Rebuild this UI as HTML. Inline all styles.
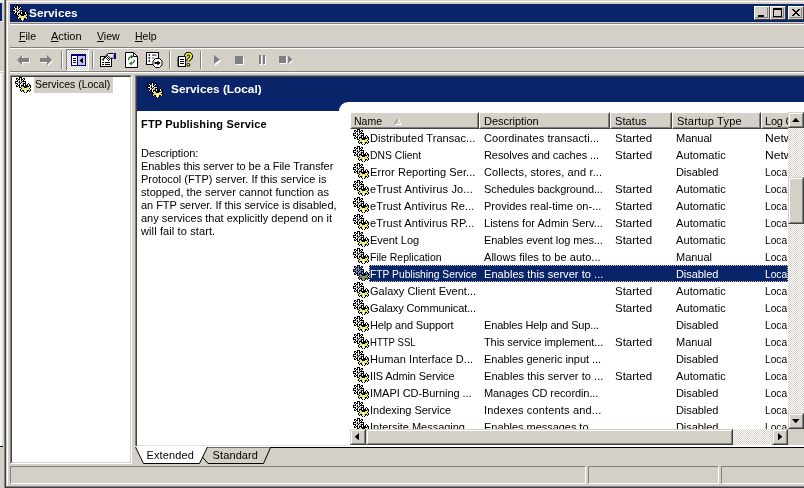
<!DOCTYPE html>
<html><head><meta charset="utf-8"><title>Services</title>
<style>
html,body{margin:0;padding:0;background:#D4D0C8;overflow:hidden}
body{width:804px;height:488px;position:relative;font-family:"Liberation Sans", sans-serif;font-size:11px;color:#000}
div{box-sizing:border-box}
u{text-decoration:underline}
</style></head><body>
<div style="position:absolute;left:0;top:0;width:804px;height:488px;overflow:hidden;will-change:transform">
<svg width="0" height="0" style="position:absolute"><defs><g id="gear" shape-rendering="crispEdges"><rect x="4" y="0" width="3" height="1" fill="#000000"/><rect x="1" y="1" width="2" height="1" fill="#000000"/><rect x="4" y="1" width="1" height="1" fill="#000000"/><rect x="5" y="1" width="1" height="1" fill="#FFFFFF"/><rect x="6" y="1" width="1" height="1" fill="#000000"/><rect x="8" y="1" width="2" height="1" fill="#000000"/><rect x="1" y="2" width="1" height="1" fill="#000000"/><rect x="2" y="2" width="1" height="1" fill="#FFFFFF"/><rect x="3" y="2" width="2" height="1" fill="#000000"/><rect x="5" y="2" width="1" height="1" fill="#FFFFFF"/><rect x="6" y="2" width="2" height="1" fill="#000000"/><rect x="8" y="2" width="1" height="1" fill="#FFFFFF"/><rect x="9" y="2" width="1" height="1" fill="#000000"/><rect x="2" y="3" width="1" height="1" fill="#000000"/><rect x="3" y="3" width="1" height="1" fill="#FFFFFF"/><rect x="4" y="3" width="1" height="1" fill="#B0B0B0"/><rect x="5" y="3" width="1" height="1" fill="#FFFFFF"/><rect x="6" y="3" width="1" height="1" fill="#000000"/><rect x="7" y="3" width="1" height="1" fill="#FFFFFF"/><rect x="8" y="3" width="1" height="1" fill="#000000"/><rect x="0" y="4" width="3" height="1" fill="#000000"/><rect x="3" y="4" width="1" height="1" fill="#FFFFFF"/><rect x="4" y="4" width="1" height="1" fill="#000000"/><rect x="5" y="4" width="1" height="1" fill="#FFFFFF"/><rect x="6" y="4" width="1" height="1" fill="#B0B0B0"/><rect x="7" y="4" width="4" height="1" fill="#000000"/><rect x="0" y="5" width="1" height="1" fill="#000000"/><rect x="1" y="5" width="2" height="1" fill="#FFFFFF"/><rect x="3" y="5" width="1" height="1" fill="#B0B0B0"/><rect x="4" y="5" width="1" height="1" fill="#000000"/><rect x="5" y="5" width="1" height="1" fill="#B0B0B0"/><rect x="6" y="5" width="1" height="1" fill="#000000"/><rect x="7" y="5" width="1" height="1" fill="#FFFFFF"/><rect x="8" y="5" width="1" height="1" fill="#B0B0B0"/><rect x="9" y="5" width="1" height="1" fill="#FFFFFF"/><rect x="10" y="5" width="1" height="1" fill="#000000"/><rect x="0" y="6" width="3" height="1" fill="#000000"/><rect x="3" y="6" width="1" height="1" fill="#FFFFFF"/><rect x="4" y="6" width="1" height="1" fill="#B0B0B0"/><rect x="5" y="6" width="1" height="1" fill="#000000"/><rect x="6" y="6" width="1" height="1" fill="#FFFFFF"/><rect x="7" y="6" width="1" height="1" fill="#B0B0B0"/><rect x="8" y="6" width="3" height="1" fill="#000000"/><rect x="13" y="6" width="1" height="1" fill="#000000"/><rect x="2" y="7" width="1" height="1" fill="#000000"/><rect x="3" y="7" width="1" height="1" fill="#FFFFFF"/><rect x="4" y="7" width="1" height="1" fill="#000000"/><rect x="5" y="7" width="1" height="1" fill="#FFFFFF"/><rect x="6" y="7" width="2" height="1" fill="#B0B0B0"/><rect x="8" y="7" width="1" height="1" fill="#000000"/><rect x="9" y="7" width="1" height="1" fill="#FFFFFF"/><rect x="10" y="7" width="1" height="1" fill="#000000"/><rect x="12" y="7" width="1" height="1" fill="#000000"/><rect x="13" y="7" width="1" height="1" fill="#FFFFFF"/><rect x="14" y="7" width="1" height="1" fill="#000000"/><rect x="1" y="8" width="1" height="1" fill="#000000"/><rect x="2" y="8" width="1" height="1" fill="#FFFFFF"/><rect x="3" y="8" width="2" height="1" fill="#000000"/><rect x="5" y="8" width="1" height="1" fill="#FFFFFF"/><rect x="6" y="8" width="3" height="1" fill="#000000"/><rect x="9" y="8" width="1" height="1" fill="#FFFFFF"/><rect x="10" y="8" width="3" height="1" fill="#000000"/><rect x="13" y="8" width="1" height="1" fill="#FFFFFF"/><rect x="14" y="8" width="2" height="1" fill="#000000"/><rect x="1" y="9" width="2" height="1" fill="#000000"/><rect x="4" y="9" width="1" height="1" fill="#000000"/><rect x="5" y="9" width="1" height="1" fill="#FFFFFF"/><rect x="6" y="9" width="1" height="1" fill="#000000"/><rect x="7" y="9" width="1" height="1" fill="#E6E67C"/><rect x="8" y="9" width="6" height="1" fill="#000000"/><rect x="14" y="9" width="1" height="1" fill="#E6E67C"/><rect x="15" y="9" width="1" height="1" fill="#000000"/><rect x="4" y="10" width="2" height="1" fill="#000000"/><rect x="6" y="10" width="3" height="1" fill="#E6E67C"/><rect x="9" y="10" width="3" height="1" fill="#000000"/><rect x="12" y="10" width="3" height="1" fill="#E6E67C"/><rect x="15" y="10" width="1" height="1" fill="#000000"/><rect x="6" y="11" width="1" height="1" fill="#000000"/><rect x="7" y="11" width="3" height="1" fill="#E6E67C"/><rect x="10" y="11" width="1" height="1" fill="#FFFFD8"/><rect x="11" y="11" width="3" height="1" fill="#E6E67C"/><rect x="14" y="11" width="1" height="1" fill="#000000"/><rect x="5" y="12" width="1" height="1" fill="#000000"/><rect x="6" y="12" width="4" height="1" fill="#E6E67C"/><rect x="10" y="12" width="1" height="1" fill="#FFFFD8"/><rect x="11" y="12" width="4" height="1" fill="#E6E67C"/><rect x="15" y="12" width="1" height="1" fill="#000000"/><rect x="5" y="13" width="1" height="1" fill="#000000"/><rect x="6" y="13" width="1" height="1" fill="#E6E67C"/><rect x="7" y="13" width="2" height="1" fill="#000000"/><rect x="9" y="13" width="1" height="1" fill="#E6E67C"/><rect x="10" y="13" width="1" height="1" fill="#FFFFD8"/><rect x="11" y="13" width="1" height="1" fill="#E6E67C"/><rect x="12" y="13" width="2" height="1" fill="#000000"/><rect x="14" y="13" width="1" height="1" fill="#E6E67C"/><rect x="15" y="13" width="1" height="1" fill="#000000"/><rect x="6" y="14" width="1" height="1" fill="#000000"/><rect x="8" y="14" width="1" height="1" fill="#000000"/><rect x="9" y="14" width="1" height="1" fill="#E6E67C"/><rect x="10" y="14" width="1" height="1" fill="#FFFFD8"/><rect x="11" y="14" width="1" height="1" fill="#E6E67C"/><rect x="12" y="14" width="1" height="1" fill="#000000"/><rect x="14" y="14" width="1" height="1" fill="#000000"/><rect x="9" y="15" width="1" height="1" fill="#000000"/><rect x="10" y="15" width="1" height="1" fill="#FFFFD8"/><rect x="11" y="15" width="1" height="1" fill="#000000"/></g><g id="geard" shape-rendering="crispEdges"><rect x="4" y="0" width="3" height="1" fill="#020A2A"/><rect x="1" y="1" width="2" height="1" fill="#020A2A"/><rect x="4" y="1" width="1" height="1" fill="#020A2A"/><rect x="5" y="1" width="1" height="1" fill="#8A96BA"/><rect x="6" y="1" width="1" height="1" fill="#020A2A"/><rect x="8" y="1" width="2" height="1" fill="#020A2A"/><rect x="1" y="2" width="1" height="1" fill="#020A2A"/><rect x="2" y="2" width="1" height="1" fill="#8A96BA"/><rect x="3" y="2" width="2" height="1" fill="#020A2A"/><rect x="5" y="2" width="1" height="1" fill="#8A96BA"/><rect x="6" y="2" width="2" height="1" fill="#020A2A"/><rect x="8" y="2" width="1" height="1" fill="#8A96BA"/><rect x="9" y="2" width="1" height="1" fill="#020A2A"/><rect x="2" y="3" width="1" height="1" fill="#020A2A"/><rect x="3" y="3" width="1" height="1" fill="#8A96BA"/><rect x="4" y="3" width="1" height="1" fill="#6A769A"/><rect x="5" y="3" width="1" height="1" fill="#8A96BA"/><rect x="6" y="3" width="1" height="1" fill="#020A2A"/><rect x="7" y="3" width="1" height="1" fill="#8A96BA"/><rect x="8" y="3" width="1" height="1" fill="#020A2A"/><rect x="0" y="4" width="3" height="1" fill="#020A2A"/><rect x="3" y="4" width="1" height="1" fill="#8A96BA"/><rect x="4" y="4" width="1" height="1" fill="#020A2A"/><rect x="5" y="4" width="1" height="1" fill="#8A96BA"/><rect x="6" y="4" width="1" height="1" fill="#6A769A"/><rect x="7" y="4" width="4" height="1" fill="#020A2A"/><rect x="0" y="5" width="1" height="1" fill="#020A2A"/><rect x="1" y="5" width="2" height="1" fill="#8A96BA"/><rect x="3" y="5" width="1" height="1" fill="#6A769A"/><rect x="4" y="5" width="1" height="1" fill="#020A2A"/><rect x="5" y="5" width="1" height="1" fill="#6A769A"/><rect x="6" y="5" width="1" height="1" fill="#020A2A"/><rect x="7" y="5" width="1" height="1" fill="#8A96BA"/><rect x="8" y="5" width="1" height="1" fill="#6A769A"/><rect x="9" y="5" width="1" height="1" fill="#8A96BA"/><rect x="10" y="5" width="1" height="1" fill="#020A2A"/><rect x="0" y="6" width="3" height="1" fill="#020A2A"/><rect x="3" y="6" width="1" height="1" fill="#8A96BA"/><rect x="4" y="6" width="1" height="1" fill="#6A769A"/><rect x="5" y="6" width="1" height="1" fill="#020A2A"/><rect x="6" y="6" width="1" height="1" fill="#8A96BA"/><rect x="7" y="6" width="1" height="1" fill="#6A769A"/><rect x="8" y="6" width="3" height="1" fill="#020A2A"/><rect x="13" y="6" width="1" height="1" fill="#020A2A"/><rect x="2" y="7" width="1" height="1" fill="#020A2A"/><rect x="3" y="7" width="1" height="1" fill="#8A96BA"/><rect x="4" y="7" width="1" height="1" fill="#020A2A"/><rect x="5" y="7" width="1" height="1" fill="#8A96BA"/><rect x="6" y="7" width="2" height="1" fill="#6A769A"/><rect x="8" y="7" width="1" height="1" fill="#020A2A"/><rect x="9" y="7" width="1" height="1" fill="#8A96BA"/><rect x="10" y="7" width="1" height="1" fill="#020A2A"/><rect x="12" y="7" width="1" height="1" fill="#020A2A"/><rect x="13" y="7" width="1" height="1" fill="#8A96BA"/><rect x="14" y="7" width="1" height="1" fill="#020A2A"/><rect x="1" y="8" width="1" height="1" fill="#020A2A"/><rect x="2" y="8" width="1" height="1" fill="#8A96BA"/><rect x="3" y="8" width="2" height="1" fill="#020A2A"/><rect x="5" y="8" width="1" height="1" fill="#8A96BA"/><rect x="6" y="8" width="3" height="1" fill="#020A2A"/><rect x="9" y="8" width="1" height="1" fill="#8A96BA"/><rect x="10" y="8" width="3" height="1" fill="#020A2A"/><rect x="13" y="8" width="1" height="1" fill="#8A96BA"/><rect x="14" y="8" width="2" height="1" fill="#020A2A"/><rect x="1" y="9" width="2" height="1" fill="#020A2A"/><rect x="4" y="9" width="1" height="1" fill="#020A2A"/><rect x="5" y="9" width="1" height="1" fill="#8A96BA"/><rect x="6" y="9" width="1" height="1" fill="#020A2A"/><rect x="7" y="9" width="1" height="1" fill="#848F62"/><rect x="8" y="9" width="6" height="1" fill="#020A2A"/><rect x="14" y="9" width="1" height="1" fill="#848F62"/><rect x="15" y="9" width="1" height="1" fill="#020A2A"/><rect x="4" y="10" width="2" height="1" fill="#020A2A"/><rect x="6" y="10" width="3" height="1" fill="#848F62"/><rect x="9" y="10" width="3" height="1" fill="#020A2A"/><rect x="12" y="10" width="3" height="1" fill="#848F62"/><rect x="15" y="10" width="1" height="1" fill="#020A2A"/><rect x="6" y="11" width="1" height="1" fill="#020A2A"/><rect x="7" y="11" width="3" height="1" fill="#848F62"/><rect x="10" y="11" width="1" height="1" fill="#98A27A"/><rect x="11" y="11" width="3" height="1" fill="#848F62"/><rect x="14" y="11" width="1" height="1" fill="#020A2A"/><rect x="5" y="12" width="1" height="1" fill="#020A2A"/><rect x="6" y="12" width="4" height="1" fill="#848F62"/><rect x="10" y="12" width="1" height="1" fill="#98A27A"/><rect x="11" y="12" width="4" height="1" fill="#848F62"/><rect x="15" y="12" width="1" height="1" fill="#020A2A"/><rect x="5" y="13" width="1" height="1" fill="#020A2A"/><rect x="6" y="13" width="1" height="1" fill="#848F62"/><rect x="7" y="13" width="2" height="1" fill="#020A2A"/><rect x="9" y="13" width="1" height="1" fill="#848F62"/><rect x="10" y="13" width="1" height="1" fill="#98A27A"/><rect x="11" y="13" width="1" height="1" fill="#848F62"/><rect x="12" y="13" width="2" height="1" fill="#020A2A"/><rect x="14" y="13" width="1" height="1" fill="#848F62"/><rect x="15" y="13" width="1" height="1" fill="#020A2A"/><rect x="6" y="14" width="1" height="1" fill="#020A2A"/><rect x="8" y="14" width="1" height="1" fill="#020A2A"/><rect x="9" y="14" width="1" height="1" fill="#848F62"/><rect x="10" y="14" width="1" height="1" fill="#98A27A"/><rect x="11" y="14" width="1" height="1" fill="#848F62"/><rect x="12" y="14" width="1" height="1" fill="#020A2A"/><rect x="14" y="14" width="1" height="1" fill="#020A2A"/><rect x="9" y="15" width="1" height="1" fill="#020A2A"/><rect x="10" y="15" width="1" height="1" fill="#98A27A"/><rect x="11" y="15" width="1" height="1" fill="#020A2A"/></g></defs></svg><div style="position:absolute;left:0px;top:0px;width:6px;height:488px;background:#D4D0C8;"></div><div style="position:absolute;left:0px;top:0px;width:6px;height:3px;background:#ECEAE6;"></div><div style="position:absolute;left:0px;top:3px;width:2px;height:18px;background:#0A246A;"></div><div style="position:absolute;left:4px;top:0px;width:1px;height:488px;background:#808080;"></div><div style="position:absolute;left:5px;top:0px;width:1px;height:488px;background:#404040;"></div><div style="position:absolute;left:0px;top:21px;width:4px;height:1px;background:#EEECE8;"></div><div style="position:absolute;left:0px;top:71px;width:4px;height:1px;background:#F4F3F0;"></div><div style="position:absolute;left:0px;top:73px;width:2px;height:373px;background:#F6F5F2;"></div><div style="position:absolute;left:2px;top:73px;width:1px;height:373px;background:#E4E1DB;"></div><div style="position:absolute;left:0px;top:446px;width:3px;height:1px;background:#000;"></div><div style="position:absolute;left:6px;top:0px;width:798px;height:488px;background:#D4D0C8;"></div><div style="position:absolute;left:7px;top:1px;width:797px;height:1px;background:#fff;"></div><div style="position:absolute;left:7px;top:1px;width:1px;height:485px;background:#fff;"></div><div style="position:absolute;left:6px;top:486px;width:798px;height:1px;background:#808080;"></div><div style="position:absolute;left:6px;top:487px;width:798px;height:1px;background:#404040;"></div><div style="position:absolute;left:10px;top:4px;width:794px;height:18px;background:#0A246A;"></div><div style="position:absolute;left:12px;top:5px;width:16px;height:16px"><svg width="16" height="16" viewBox="0 0 16 16" style="position:absolute;left:0;top:0"><use href="#gear"/></svg></div><div style="position:absolute;left:754px;top:6px;width:16px;height:14px;background:#D4D0C8;box-sizing:border-box;border:1px solid;border-color:#fff #404040 #404040 #fff"><div style="position:absolute;left:0;top:0;width:13px;height:11px;box-sizing:border-box;border:1px solid;border-color:#D4D0C8 #808080 #808080 #D4D0C8"></div></div><div style="position:absolute;left:770px;top:6px;width:16px;height:14px;background:#D4D0C8;box-sizing:border-box;border:1px solid;border-color:#fff #404040 #404040 #fff"><div style="position:absolute;left:0;top:0;width:13px;height:11px;box-sizing:border-box;border:1px solid;border-color:#D4D0C8 #808080 #808080 #D4D0C8"></div></div><div style="position:absolute;left:788px;top:6px;width:16px;height:14px;background:#D4D0C8;box-sizing:border-box;border:1px solid;border-color:#fff #404040 #404040 #fff"><div style="position:absolute;left:0;top:0;width:13px;height:11px;box-sizing:border-box;border:1px solid;border-color:#D4D0C8 #808080 #808080 #D4D0C8"></div></div><div style="position:absolute;left:758px;top:15px;width:6px;height:2px;background:#000;"></div><div style="position:absolute;left:773px;top:8px;width:9px;height:9px;box-sizing:border-box;border:1px solid #000;border-top-width:2px"></div><svg style="position:absolute;left:792px;top:9px" width="8" height="7" viewBox="0 0 8 7" shape-rendering="crispEdges" fill="#000"><rect x="0" y="0" width="2" height="1"/><rect x="6" y="0" width="2" height="1"/><rect x="1" y="1" width="2" height="1"/><rect x="5" y="1" width="2" height="1"/><rect x="2" y="2" width="2" height="1"/><rect x="4" y="2" width="2" height="1"/><rect x="3" y="3" width="2" height="1"/><rect x="2" y="4" width="2" height="1"/><rect x="4" y="4" width="2" height="1"/><rect x="1" y="5" width="2" height="1"/><rect x="5" y="5" width="2" height="1"/><rect x="0" y="6" width="2" height="1"/><rect x="6" y="6" width="2" height="1"/></svg><div style="position:absolute;left:10px;top:23px;width:794px;height:1px;background:#808080;"></div><div style="position:absolute;left:10px;top:24px;width:794px;height:1px;background:#fff;"></div><div style="position:absolute;left:10px;top:47px;width:794px;height:1px;background:#808080;"></div><div style="position:absolute;left:10px;top:48px;width:794px;height:1px;background:#fff;"></div><div style="position:absolute;left:10px;top:71px;width:794px;height:1px;background:#808080;"></div><div style="position:absolute;left:10px;top:72px;width:794px;height:1px;background:#fff;"></div><div style="position:absolute;left:61px;top:51px;width:1px;height:18px;background:#808080;"></div><div style="position:absolute;left:62px;top:51px;width:1px;height:18px;background:#fff;"></div><div style="position:absolute;left:92px;top:51px;width:1px;height:18px;background:#808080;"></div><div style="position:absolute;left:93px;top:51px;width:1px;height:18px;background:#fff;"></div><div style="position:absolute;left:169px;top:51px;width:1px;height:18px;background:#808080;"></div><div style="position:absolute;left:170px;top:51px;width:1px;height:18px;background:#fff;"></div><div style="position:absolute;left:200px;top:51px;width:1px;height:18px;background:#808080;"></div><div style="position:absolute;left:201px;top:51px;width:1px;height:18px;background:#fff;"></div><svg style="position:absolute;left:0;top:0" width="804" height="100" viewBox="0 0 804 100"><path d="M0 5 L5 0 L5 3 L12 3 L12 7 L5 7 L5 10 Z" transform="translate(18,56)" fill="#fff"/><path d="M0 5 L5 0 L5 3 L12 3 L12 7 L5 7 L5 10 Z" transform="translate(17,55)" fill="#808080"/><path d="M0 5 L5 0 L5 3 L12 3 L12 7 L5 7 L5 10 Z" transform="translate(53,56) scale(-1,1)" fill="#fff"/><path d="M0 5 L5 0 L5 3 L12 3 L12 7 L5 7 L5 10 Z" transform="translate(52,55) scale(-1,1)" fill="#808080"/></svg><div style="position:absolute;left:66px;top:49px;width:23px;height:22px;box-sizing:border-box;background:#fff;background-image:conic-gradient(#fff 25%,#D4D0C8 0 50%,#fff 0 75%,#D4D0C8 0);background-size:2px 2px;border:1px solid;border-color:#808080 #fff #fff #808080"></div><svg style="position:absolute;left:71px;top:54px" width="15" height="12" viewBox="0 0 15 12"><rect x="0" y="0" width="15" height="12" fill="#000080"/><rect x="1" y="2" width="5" height="9" fill="#fff"/><rect x="7" y="2" width="7" height="9" fill="#C6C6F0"/><rect x="2" y="4" width="3" height="1" fill="#000"/><rect x="2" y="6" width="3" height="1" fill="#000"/><rect x="2" y="8" width="3" height="1" fill="#000"/><path d="M12 3.5 L8.5 6.5 L12 9.5Z" fill="#000"/></svg><svg style="position:absolute;left:100px;top:52px" width="17" height="16" viewBox="0 0 17 16"><defs><pattern id="chk" width="2" height="2" patternUnits="userSpaceOnUse"><rect width="2" height="2" fill="#fff"/><rect width="1" height="1" fill="#222"/><rect x="1" y="1" width="1" height="1" fill="#222"/></pattern></defs><rect x="0.5" y="4.5" width="11" height="10" fill="#fff" stroke="#000"/><rect x="2" y="10" width="2" height="1" fill="#000"/><rect x="5" y="10" width="5" height="1" fill="#000"/><rect x="2" y="12" width="2" height="1" fill="#000"/><rect x="5" y="12" width="5" height="1" fill="#000"/><path d="M7 2 L8 1.5 L13.5 1.5 L13.5 6 L10.5 6 Z" fill="#E4E4EC"/><path d="M2.8 7 L7 2.2 L10.6 6 L8.3 8.8 L5.6 6 L3.4 8 Z" fill="url(#chk)"/><path d="M2.6 7.6 L7.4 2.2 L8.2 1.5 L13.5 1.5 M13.5 6.2 L10.6 6.2 L8.3 9" fill="none" stroke="#000" stroke-width="1"/><path d="M2.5 7 L3 8.3 L4 8" fill="none" stroke="#000" stroke-width="1"/><path d="M14 1 H16 V7 H14 V5 L13 4 L14 3 Z" fill="#000080"/></svg><svg style="position:absolute;left:124px;top:52px" width="15" height="16" viewBox="0 0 15 16"><path d="M1.5 0.5 H9.5 L13.5 4.5 V15.5 H1.5Z" fill="#fff" stroke="#000" stroke-width="1"/><path d="M9.5 0.5 V4.5 H13.5" fill="none" stroke="#000" stroke-width="1"/><path d="M4.6 8.2 A3 3 0 0 1 7.5 4.6" fill="none" stroke="#1F7A1F" stroke-width="1.3"/><path d="M7 2.6 L9.8 4.7 L7 6.8Z" fill="#1F7A1F"/><path d="M10.2 7.6 A3 3 0 0 1 7.3 11.4" fill="none" stroke="#1F7A1F" stroke-width="1.3"/><path d="M7.8 9.3 L5 11.4 L7.8 13.5Z" fill="#1F7A1F"/></svg><svg style="position:absolute;left:146px;top:52px" width="17" height="16" viewBox="0 0 17 16"><rect x="0.5" y="0.5" width="12" height="12" fill="#fff" stroke="#000"/><rect x="2.5" y="2.2" width="1.6" height="1.6" fill="#10104A"/><rect x="6" y="2.6" width="4.5" height="1" fill="#222"/><rect x="2.5" y="5.2" width="1.6" height="1.6" fill="#10104A"/><rect x="6" y="5.6" width="2.5" height="1" fill="#666"/><rect x="2.5" y="8.2" width="1.6" height="1.6" fill="#10104A"/><path d="M9.5 6.5 H13.5 L16 9 V13 L13.5 15.5 H9.5 L7 13 V9Z" fill="#fff" stroke="#000" stroke-width="1"/><path d="M8.5 10 H11.5 V8.6 L14.6 11 L11.5 13.4 V12 H8.5Z" fill="#000"/></svg><svg style="position:absolute;left:177px;top:51px" width="16" height="17" viewBox="0 0 16 17"><rect x="1.5" y="5.5" width="7" height="10" fill="#fff" stroke="#000" stroke-width="1"/><rect x="0.5" y="6.5" width="1" height="9" fill="#000"/><rect x="3" y="8" width="4" height="1" fill="#000"/><rect x="3" y="10" width="4" height="1" fill="#000"/><rect x="3" y="12" width="4" height="1" fill="#000"/><path d="M8.8 5.4 A2.7 2.7 0 1 1 13.2 7.4 L11.3 9 L11.3 10.6" fill="none" stroke="#000" stroke-width="3.6" stroke-linecap="butt"/><path d="M8.8 5.4 A2.7 2.7 0 1 1 13.2 7.4 L11.3 9 L11.3 10.6" fill="none" stroke="#F4F428" stroke-width="1.8"/><circle cx="11.3" cy="13.8" r="1.9" fill="#000"/><circle cx="11.3" cy="13.8" r="1" fill="#F4F428"/></svg><svg style="position:absolute;left:205px;top:49px" width="95" height="22" viewBox="0 0 95 22"><path d="M10 7 L16 12 L10 17Z" fill="#fff"/><path d="M9 6 L15 10.5 L9 15Z" fill="#808080"/><rect x="31" y="8" width="8" height="8" fill="#fff"/><rect x="30" y="7" width="8" height="8" fill="#808080"/><rect x="55" y="7" width="2" height="9" fill="#fff"/><rect x="59" y="7" width="2" height="9" fill="#fff"/><rect x="54" y="6" width="2" height="9" fill="#808080"/><rect x="58" y="6" width="2" height="9" fill="#808080"/><rect x="75" y="8" width="7" height="7" fill="#fff"/><path d="M84 8 L88 11.5 L84 15.5Z" fill="#fff"/><rect x="74" y="7" width="7" height="7" fill="#808080"/><path d="M83 6.5 L87.5 10.5 L83 14.5Z" fill="#808080"/></svg><div style="position:absolute;left:10px;top:75px;width:122px;height:389px;box-sizing:border-box;background:#fff;border:1px solid;border-color:#808080 #fff #fff #808080"><div style="position:absolute;left:0;top:0;right:0;bottom:0;border:1px solid;border-color:#404040 #D4D0C8 #D4D0C8 #404040"></div></div><div style="position:absolute;left:15px;top:77px;width:16px;height:16px"><svg width="16" height="16" viewBox="0 0 16 16" style="position:absolute;left:0;top:0"><use href="#gear"/></svg></div><div style="position:absolute;left:34px;top:77px;width:79px;height:16px;background:#D4D0C8;"></div><div style="position:absolute;left:135px;top:75px;width:669px;height:1px;background:#808080;"></div><div style="position:absolute;left:135px;top:75px;width:1px;height:371px;background:#808080;"></div><div style="position:absolute;left:136px;top:76px;width:668px;height:1px;background:#404040;"></div><div style="position:absolute;left:136px;top:76px;width:1px;height:370px;background:#404040;"></div><div style="position:absolute;left:135px;top:446px;width:2px;height:1px;background:#fff;"></div><div style="position:absolute;left:137px;top:77px;width:667px;height:370px;background:#fff;"></div><div style="position:absolute;left:137px;top:445px;width:213px;height:1px;background:#E6E4DF;"></div><div style="position:absolute;left:137px;top:77px;width:667px;height:34px;background:#0A246A;"></div><div style="position:absolute;left:339px;top:102px;width:465px;height:20px;background:#fff;border-top-left-radius:9px"></div><div style="position:absolute;left:147px;top:82px;width:16px;height:16px"><svg width="16" height="16" viewBox="0 0 16 16" style="position:absolute;left:0;top:0"><use href="#gear"/></svg></div><div style="position:absolute;left:350px;top:112px;width:129px;height:17px;box-sizing:border-box;background:#D4D0C8;border:1px solid;border-color:#fff #404040 #404040 #fff"><div style="position:absolute;left:0;top:0;right:0;bottom:0;border:1px solid;border-color:#D4D0C8 #808080 #808080 #D4D0C8"></div></div><div style="position:absolute;left:479px;top:112px;width:131px;height:17px;box-sizing:border-box;background:#D4D0C8;border:1px solid;border-color:#fff #404040 #404040 #fff"><div style="position:absolute;left:0;top:0;right:0;bottom:0;border:1px solid;border-color:#D4D0C8 #808080 #808080 #D4D0C8"></div></div><div style="position:absolute;left:610px;top:112px;width:62px;height:17px;box-sizing:border-box;background:#D4D0C8;border:1px solid;border-color:#fff #404040 #404040 #fff"><div style="position:absolute;left:0;top:0;right:0;bottom:0;border:1px solid;border-color:#D4D0C8 #808080 #808080 #D4D0C8"></div></div><div style="position:absolute;left:672px;top:112px;width:89px;height:17px;box-sizing:border-box;background:#D4D0C8;border:1px solid;border-color:#fff #404040 #404040 #fff"><div style="position:absolute;left:0;top:0;right:0;bottom:0;border:1px solid;border-color:#D4D0C8 #808080 #808080 #D4D0C8"></div></div><div style="position:absolute;left:761px;top:112px;width:60px;height:17px;box-sizing:border-box;background:#D4D0C8;border:1px solid;border-color:#fff #404040 #404040 #fff"><div style="position:absolute;left:0;top:0;right:0;bottom:0;border:1px solid;border-color:#D4D0C8 #808080 #808080 #D4D0C8"></div></div><svg style="position:absolute;left:394px;top:118px" width="9" height="7" viewBox="0 0 9 7"><path d="M0.5 6.5 L4 0.5" stroke="#808080" fill="none"/><path d="M4 0.5 L7.5 6.5 L0.5 6.5" stroke="#fff" fill="none"/></svg><div id="list" style="position:absolute;left:350px;top:129px;width:438px;height:300px;overflow:hidden"><div style="position:absolute;left:3px;top:0px;width:16px;height:16px"><svg width="16" height="16" viewBox="0 0 16 16" style="position:absolute;left:0;top:0"><use href="#gear"/></svg></div><div style="position:absolute;left:3px;top:17px;width:16px;height:16px"><svg width="16" height="16" viewBox="0 0 16 16" style="position:absolute;left:0;top:0"><use href="#gear"/></svg></div><div style="position:absolute;left:3px;top:34px;width:16px;height:16px"><svg width="16" height="16" viewBox="0 0 16 16" style="position:absolute;left:0;top:0"><use href="#gear"/></svg></div><div style="position:absolute;left:3px;top:51px;width:16px;height:16px"><svg width="16" height="16" viewBox="0 0 16 16" style="position:absolute;left:0;top:0"><use href="#gear"/></svg></div><div style="position:absolute;left:3px;top:68px;width:16px;height:16px"><svg width="16" height="16" viewBox="0 0 16 16" style="position:absolute;left:0;top:0"><use href="#gear"/></svg></div><div style="position:absolute;left:3px;top:85px;width:16px;height:16px"><svg width="16" height="16" viewBox="0 0 16 16" style="position:absolute;left:0;top:0"><use href="#gear"/></svg></div><div style="position:absolute;left:3px;top:102px;width:16px;height:16px"><svg width="16" height="16" viewBox="0 0 16 16" style="position:absolute;left:0;top:0"><use href="#gear"/></svg></div><div style="position:absolute;left:3px;top:119px;width:16px;height:16px"><svg width="16" height="16" viewBox="0 0 16 16" style="position:absolute;left:0;top:0"><use href="#gear"/></svg></div><div style="position:absolute;left:19px;top:136px;width:419px;height:17px;background:#0A246A;box-sizing:border-box;border:1px dotted #D8C8A0"></div><div style="position:absolute;left:3px;top:136px;width:16px;height:16px"><svg width="16" height="16" viewBox="0 0 16 16" style="position:absolute;left:0;top:0"><use href="#geard"/></svg></div><div style="position:absolute;left:3px;top:153px;width:16px;height:16px"><svg width="16" height="16" viewBox="0 0 16 16" style="position:absolute;left:0;top:0"><use href="#gear"/></svg></div><div style="position:absolute;left:3px;top:170px;width:16px;height:16px"><svg width="16" height="16" viewBox="0 0 16 16" style="position:absolute;left:0;top:0"><use href="#gear"/></svg></div><div style="position:absolute;left:3px;top:187px;width:16px;height:16px"><svg width="16" height="16" viewBox="0 0 16 16" style="position:absolute;left:0;top:0"><use href="#gear"/></svg></div><div style="position:absolute;left:3px;top:204px;width:16px;height:16px"><svg width="16" height="16" viewBox="0 0 16 16" style="position:absolute;left:0;top:0"><use href="#gear"/></svg></div><div style="position:absolute;left:3px;top:221px;width:16px;height:16px"><svg width="16" height="16" viewBox="0 0 16 16" style="position:absolute;left:0;top:0"><use href="#gear"/></svg></div><div style="position:absolute;left:3px;top:238px;width:16px;height:16px"><svg width="16" height="16" viewBox="0 0 16 16" style="position:absolute;left:0;top:0"><use href="#gear"/></svg></div><div style="position:absolute;left:3px;top:255px;width:16px;height:16px"><svg width="16" height="16" viewBox="0 0 16 16" style="position:absolute;left:0;top:0"><use href="#gear"/></svg></div><div style="position:absolute;left:3px;top:272px;width:16px;height:16px"><svg width="16" height="16" viewBox="0 0 16 16" style="position:absolute;left:0;top:0"><use href="#gear"/></svg></div><div style="position:absolute;left:3px;top:289px;width:16px;height:16px"><svg width="16" height="16" viewBox="0 0 16 16" style="position:absolute;left:0;top:0"><use href="#gear"/></svg></div><span style="position:absolute;left:20px;top:3px;white-space:pre;line-height:13px;color:#000;letter-spacing:0.070px;">Distributed Transac...</span><span style="position:absolute;left:134px;top:3px;white-space:pre;line-height:13px;color:#000;letter-spacing:0.086px;">Coordinates transacti...</span><span style="position:absolute;left:265px;top:3px;white-space:pre;line-height:13px;color:#000;transform:scaleX(1.0460);transform-origin:0 0;">Started</span><span style="position:absolute;left:326px;top:3px;white-space:pre;line-height:13px;color:#000;letter-spacing:-0.016px;">Manual</span><span style="position:absolute;left:415px;top:3px;white-space:pre;line-height:13px;color:#000;transform:scaleX(1.1012);transform-origin:0 0;">Netw</span><span style="position:absolute;left:20px;top:20px;white-space:pre;line-height:13px;color:#000;transform:scaleX(0.9392);transform-origin:0 0;">DNS Client</span><span style="position:absolute;left:134px;top:20px;white-space:pre;line-height:13px;color:#000;letter-spacing:-0.077px;">Resolves and caches ...</span><span style="position:absolute;left:265px;top:20px;white-space:pre;line-height:13px;color:#000;transform:scaleX(1.0460);transform-origin:0 0;">Started</span><span style="position:absolute;left:326px;top:20px;white-space:pre;line-height:13px;color:#000;letter-spacing:0.110px;">Automatic</span><span style="position:absolute;left:415px;top:20px;white-space:pre;line-height:13px;color:#000;transform:scaleX(1.1012);transform-origin:0 0;">Netw</span><span style="position:absolute;left:20px;top:37px;white-space:pre;line-height:13px;color:#000;letter-spacing:0.070px;">Error Reporting Ser...</span><span style="position:absolute;left:134px;top:37px;white-space:pre;line-height:13px;color:#000;letter-spacing:0.126px;">Collects, stores, and r...</span><span style="position:absolute;left:326px;top:37px;white-space:pre;line-height:13px;color:#000;letter-spacing:-0.073px;">Disabled</span><span style="position:absolute;left:415px;top:37px;white-space:pre;line-height:13px;color:#000;transform:scaleX(0.9263);transform-origin:0 0;">Loca</span><span style="position:absolute;left:20px;top:54px;white-space:pre;line-height:13px;color:#000;letter-spacing:0.174px;">eTrust Antivirus Jo...</span><span style="position:absolute;left:134px;top:54px;white-space:pre;line-height:13px;color:#000;letter-spacing:-0.100px;">Schedules background...</span><span style="position:absolute;left:265px;top:54px;white-space:pre;line-height:13px;color:#000;transform:scaleX(1.0460);transform-origin:0 0;">Started</span><span style="position:absolute;left:326px;top:54px;white-space:pre;line-height:13px;color:#000;letter-spacing:0.110px;">Automatic</span><span style="position:absolute;left:415px;top:54px;white-space:pre;line-height:13px;color:#000;transform:scaleX(0.9263);transform-origin:0 0;">Loca</span><span style="position:absolute;left:20px;top:71px;white-space:pre;line-height:13px;color:#000;letter-spacing:0.129px;">eTrust Antivirus Re...</span><span style="position:absolute;left:134px;top:71px;white-space:pre;line-height:13px;color:#000;letter-spacing:0.026px;">Provides real-time on-...</span><span style="position:absolute;left:265px;top:71px;white-space:pre;line-height:13px;color:#000;transform:scaleX(1.0460);transform-origin:0 0;">Started</span><span style="position:absolute;left:326px;top:71px;white-space:pre;line-height:13px;color:#000;letter-spacing:0.110px;">Automatic</span><span style="position:absolute;left:415px;top:71px;white-space:pre;line-height:13px;color:#000;transform:scaleX(0.9263);transform-origin:0 0;">Loca</span><span style="position:absolute;left:20px;top:88px;white-space:pre;line-height:13px;color:#000;letter-spacing:0.139px;">eTrust Antivirus RP...</span><span style="position:absolute;left:134px;top:88px;white-space:pre;line-height:13px;color:#000;letter-spacing:0.021px;">Listens for Admin Serv...</span><span style="position:absolute;left:265px;top:88px;white-space:pre;line-height:13px;color:#000;transform:scaleX(1.0460);transform-origin:0 0;">Started</span><span style="position:absolute;left:326px;top:88px;white-space:pre;line-height:13px;color:#000;letter-spacing:0.110px;">Automatic</span><span style="position:absolute;left:415px;top:88px;white-space:pre;line-height:13px;color:#000;transform:scaleX(0.9263);transform-origin:0 0;">Loca</span><span style="position:absolute;left:20px;top:105px;white-space:pre;line-height:13px;color:#000;letter-spacing:-0.056px;">Event Log</span><span style="position:absolute;left:134px;top:105px;white-space:pre;line-height:13px;color:#000;letter-spacing:-0.068px;">Enables event log mes...</span><span style="position:absolute;left:265px;top:105px;white-space:pre;line-height:13px;color:#000;transform:scaleX(1.0460);transform-origin:0 0;">Started</span><span style="position:absolute;left:326px;top:105px;white-space:pre;line-height:13px;color:#000;letter-spacing:0.110px;">Automatic</span><span style="position:absolute;left:415px;top:105px;white-space:pre;line-height:13px;color:#000;transform:scaleX(0.9263);transform-origin:0 0;">Loca</span><span style="position:absolute;left:20px;top:122px;white-space:pre;line-height:13px;color:#000;transform:scaleX(0.9521);transform-origin:0 0;">File Replication</span><span style="position:absolute;left:134px;top:122px;white-space:pre;line-height:13px;color:#000;letter-spacing:0.041px;">Allows files to be auto...</span><span style="position:absolute;left:326px;top:122px;white-space:pre;line-height:13px;color:#000;letter-spacing:-0.016px;">Manual</span><span style="position:absolute;left:415px;top:122px;white-space:pre;line-height:13px;color:#000;transform:scaleX(0.9263);transform-origin:0 0;">Loca</span><span style="position:absolute;left:20px;top:139px;white-space:pre;line-height:13px;color:#fff;transform:scaleX(0.9341);transform-origin:0 0;">FTP Publishing Service</span><span style="position:absolute;left:134px;top:139px;white-space:pre;line-height:13px;color:#fff;letter-spacing:0.052px;">Enables this server to ...</span><span style="position:absolute;left:326px;top:139px;white-space:pre;line-height:13px;color:#fff;letter-spacing:-0.073px;">Disabled</span><span style="position:absolute;left:415px;top:139px;white-space:pre;line-height:13px;color:#fff;transform:scaleX(0.9263);transform-origin:0 0;">Loca</span><span style="position:absolute;left:20px;top:156px;white-space:pre;line-height:13px;color:#000;letter-spacing:0.015px;">Galaxy Client Event...</span><span style="position:absolute;left:265px;top:156px;white-space:pre;line-height:13px;color:#000;transform:scaleX(1.0460);transform-origin:0 0;">Started</span><span style="position:absolute;left:326px;top:156px;white-space:pre;line-height:13px;color:#000;letter-spacing:0.110px;">Automatic</span><span style="position:absolute;left:415px;top:156px;white-space:pre;line-height:13px;color:#000;transform:scaleX(0.9263);transform-origin:0 0;">Loca</span><span style="position:absolute;left:20px;top:173px;white-space:pre;line-height:13px;color:#000;letter-spacing:-0.111px;">Galaxy Communicat...</span><span style="position:absolute;left:265px;top:173px;white-space:pre;line-height:13px;color:#000;transform:scaleX(1.0460);transform-origin:0 0;">Started</span><span style="position:absolute;left:326px;top:173px;white-space:pre;line-height:13px;color:#000;letter-spacing:0.110px;">Automatic</span><span style="position:absolute;left:415px;top:173px;white-space:pre;line-height:13px;color:#000;transform:scaleX(0.9263);transform-origin:0 0;">Loca</span><span style="position:absolute;left:20px;top:190px;white-space:pre;line-height:13px;color:#000;letter-spacing:-0.135px;">Help and Support</span><span style="position:absolute;left:134px;top:190px;white-space:pre;line-height:13px;color:#000;letter-spacing:-0.161px;">Enables Help and Sup...</span><span style="position:absolute;left:326px;top:190px;white-space:pre;line-height:13px;color:#000;letter-spacing:-0.073px;">Disabled</span><span style="position:absolute;left:415px;top:190px;white-space:pre;line-height:13px;color:#000;transform:scaleX(0.9263);transform-origin:0 0;">Loca</span><span style="position:absolute;left:20px;top:207px;white-space:pre;line-height:13px;color:#000;transform:scaleX(0.8706);transform-origin:0 0;">HTTP SSL</span><span style="position:absolute;left:134px;top:207px;white-space:pre;line-height:13px;color:#000;letter-spacing:-0.098px;">This service implement...</span><span style="position:absolute;left:265px;top:207px;white-space:pre;line-height:13px;color:#000;transform:scaleX(1.0460);transform-origin:0 0;">Started</span><span style="position:absolute;left:326px;top:207px;white-space:pre;line-height:13px;color:#000;letter-spacing:-0.016px;">Manual</span><span style="position:absolute;left:415px;top:207px;white-space:pre;line-height:13px;color:#000;transform:scaleX(0.9263);transform-origin:0 0;">Loca</span><span style="position:absolute;left:20px;top:224px;white-space:pre;line-height:13px;color:#000;letter-spacing:0.089px;">Human Interface D...</span><span style="position:absolute;left:134px;top:224px;white-space:pre;line-height:13px;color:#000;letter-spacing:-0.035px;">Enables generic input ...</span><span style="position:absolute;left:326px;top:224px;white-space:pre;line-height:13px;color:#000;letter-spacing:-0.073px;">Disabled</span><span style="position:absolute;left:415px;top:224px;white-space:pre;line-height:13px;color:#000;transform:scaleX(0.9263);transform-origin:0 0;">Loca</span><span style="position:absolute;left:20px;top:241px;white-space:pre;line-height:13px;color:#000;letter-spacing:-0.139px;">IIS Admin Service</span><span style="position:absolute;left:134px;top:241px;white-space:pre;line-height:13px;color:#000;letter-spacing:0.052px;">Enables this server to ...</span><span style="position:absolute;left:265px;top:241px;white-space:pre;line-height:13px;color:#000;transform:scaleX(1.0460);transform-origin:0 0;">Started</span><span style="position:absolute;left:326px;top:241px;white-space:pre;line-height:13px;color:#000;letter-spacing:0.110px;">Automatic</span><span style="position:absolute;left:415px;top:241px;white-space:pre;line-height:13px;color:#000;transform:scaleX(0.9263);transform-origin:0 0;">Loca</span><span style="position:absolute;left:20px;top:258px;white-space:pre;line-height:13px;color:#000;letter-spacing:-0.058px;">IMAPI CD-Burning ...</span><span style="position:absolute;left:134px;top:258px;white-space:pre;line-height:13px;color:#000;letter-spacing:-0.084px;">Manages CD recordin...</span><span style="position:absolute;left:326px;top:258px;white-space:pre;line-height:13px;color:#000;letter-spacing:-0.073px;">Disabled</span><span style="position:absolute;left:415px;top:258px;white-space:pre;line-height:13px;color:#000;transform:scaleX(0.9263);transform-origin:0 0;">Loca</span><span style="position:absolute;left:20px;top:275px;white-space:pre;line-height:13px;color:#000;letter-spacing:-0.022px;">Indexing Service</span><span style="position:absolute;left:134px;top:275px;white-space:pre;line-height:13px;color:#000;letter-spacing:0.157px;">Indexes contents and...</span><span style="position:absolute;left:326px;top:275px;white-space:pre;line-height:13px;color:#000;letter-spacing:-0.073px;">Disabled</span><span style="position:absolute;left:415px;top:275px;white-space:pre;line-height:13px;color:#000;transform:scaleX(0.9263);transform-origin:0 0;">Loca</span><span style="position:absolute;left:20px;top:292px;white-space:pre;line-height:13px;color:#000;letter-spacing:-0.022px;">Intersite Messaging</span><span style="position:absolute;left:134px;top:292px;white-space:pre;line-height:13px;color:#000;letter-spacing:-0.037px;">Enables messages to ...</span><span style="position:absolute;left:326px;top:292px;white-space:pre;line-height:13px;color:#000;letter-spacing:-0.073px;">Disabled</span><span style="position:absolute;left:415px;top:292px;white-space:pre;line-height:13px;color:#000;transform:scaleX(0.9263);transform-origin:0 0;">Loca</span></div><div style="position:absolute;left:0;top:0;z-index:5"><div style="position:absolute;left:788px;top:112px;width:16px;height:317px;background:#fff;background-image:conic-gradient(#fff 25%,#D4D0C8 0 50%,#fff 0 75%,#D4D0C8 0);background-size:2px 2px"></div><div style="position:absolute;left:788px;top:112px;width:16px;height:16px;background:#D4D0C8;box-sizing:border-box;border:1px solid;border-color:#D4D0C8 #404040 #404040 #D4D0C8"><div style="position:absolute;left:0;top:0;right:0;bottom:0;border:1px solid;border-color:#fff #808080 #808080 #fff"></div></div><div style="position:absolute;left:788px;top:177px;width:16px;height:47px;background:#D4D0C8;box-sizing:border-box;border:1px solid;border-color:#D4D0C8 #404040 #404040 #D4D0C8"><div style="position:absolute;left:0;top:0;right:0;bottom:0;border:1px solid;border-color:#fff #808080 #808080 #fff"></div></div><div style="position:absolute;left:788px;top:413px;width:16px;height:16px;background:#D4D0C8;box-sizing:border-box;border:1px solid;border-color:#D4D0C8 #404040 #404040 #D4D0C8"><div style="position:absolute;left:0;top:0;right:0;bottom:0;border:1px solid;border-color:#fff #808080 #808080 #fff"></div></div><svg style="position:absolute;left:792px;top:118px" width="8" height="4" viewBox="0 0 8 4"><path d="M0 4 L3.5 0 L4 0 L7.5 4Z" fill="#000"/></svg><svg style="position:absolute;left:792px;top:419px" width="8" height="4" viewBox="0 0 8 4"><path d="M0 0 L7.5 0 L4 4 L3.5 4Z" fill="#000"/></svg></div><div style="position:absolute;left:350px;top:429px;width:438px;height:16px;background:#fff;background-image:conic-gradient(#fff 25%,#D4D0C8 0 50%,#fff 0 75%,#D4D0C8 0);background-size:2px 2px"></div><div style="position:absolute;left:350px;top:429px;width:16px;height:16px;background:#D4D0C8;box-sizing:border-box;border:1px solid;border-color:#D4D0C8 #404040 #404040 #D4D0C8"><div style="position:absolute;left:0;top:0;right:0;bottom:0;border:1px solid;border-color:#fff #808080 #808080 #fff"></div></div><div style="position:absolute;left:366px;top:429px;width:367px;height:16px;background:#D4D0C8;box-sizing:border-box;border:1px solid;border-color:#D4D0C8 #404040 #404040 #D4D0C8"><div style="position:absolute;left:0;top:0;right:0;bottom:0;border:1px solid;border-color:#fff #808080 #808080 #fff"></div></div><div style="position:absolute;left:772px;top:429px;width:16px;height:16px;background:#D4D0C8;box-sizing:border-box;border:1px solid;border-color:#D4D0C8 #404040 #404040 #D4D0C8"><div style="position:absolute;left:0;top:0;right:0;bottom:0;border:1px solid;border-color:#fff #808080 #808080 #fff"></div></div><svg style="position:absolute;left:355px;top:433px" width="4" height="8" viewBox="0 0 4 8"><path d="M4 0 L4 7.5 L0 4 L0 3.5Z" fill="#000"/></svg><svg style="position:absolute;left:778px;top:433px" width="4" height="8" viewBox="0 0 4 8"><path d="M0 0 L0 7.5 L4 4 L4 3.5Z" fill="#000"/></svg><div style="position:absolute;left:788px;top:429px;width:16px;height:16px;background:#D4D0C8;"></div><div style="position:absolute;left:135px;top:447px;width:669px;height:17px;background:#D4D0C8;"></div><div style="position:absolute;left:206px;top:447px;width:598px;height:1px;background:#000;"></div><svg style="position:absolute;left:132px;top:445px" width="150" height="20" viewBox="0 0 150 20"><path d="M75.5 2.5 L138.5 2.5 L131.5 18.5 L76 18.5 L69.5 12 Z" fill="#D4D0C8" stroke="none"/><path d="M138.5 2.5 L131.5 18.5 L76 18.5 L70 11.5" fill="none" stroke="#000" stroke-width="1"/><path d="M3.5 2 L11.5 18.5 L67.5 18.5 L75.5 2 Z" fill="#fff" stroke="none"/><path d="M3.5 2 L11.5 18.5 L67.5 18.5 L75.5 2" fill="none" stroke="#000" stroke-width="1"/></svg><div style="position:absolute;left:10px;top:466px;width:576px;height:18px;box-sizing:border-box;border:1px solid;border-color:#808080 #fff #fff #808080"></div><div style="position:absolute;left:588px;top:466px;width:131px;height:18px;box-sizing:border-box;border:1px solid;border-color:#808080 #fff #fff #808080"></div><div style="position:absolute;left:721px;top:466px;width:100px;height:18px;box-sizing:border-box;border:1px solid;border-color:#808080 #fff #fff #808080"></div><span style="position:absolute;left:29px;top:7px;white-space:pre;line-height:13px;color:#fff;font-weight:bold;transform:scaleX(1.0737);transform-origin:0 0;">Services</span><span style="position:absolute;left:19px;top:30px;white-space:pre;line-height:13px;color:#000;transform:scaleX(0.9634);transform-origin:0 0;"><u>F</u>ile</span><span style="position:absolute;left:51px;top:30px;white-space:pre;line-height:13px;color:#000;letter-spacing:0.001px;"><u>A</u>ction</span><span style="position:absolute;left:97px;top:30px;white-space:pre;line-height:13px;color:#000;transform:scaleX(0.9554);transform-origin:0 0;"><u>V</u>iew</span><span style="position:absolute;left:135px;top:30px;white-space:pre;line-height:13px;color:#000;transform:scaleX(0.9540);transform-origin:0 0;"><u>H</u>elp</span><span style="position:absolute;left:35px;top:78px;white-space:pre;line-height:13px;color:#000;transform:scaleX(0.9536);transform-origin:0 0;">Services (Local)</span><span style="position:absolute;left:171px;top:83px;white-space:pre;line-height:13px;color:#fff;font-weight:bold;transform:scaleX(1.0738);transform-origin:0 0;">Services (Local)</span><span style="position:absolute;left:141px;top:118px;white-space:pre;line-height:13px;color:#000;font-weight:bold;letter-spacing:0.168px;">FTP Publishing Service</span><span style="position:absolute;left:141px;top:147px;white-space:pre;line-height:13px;color:#000;letter-spacing:-0.062px;">Description:</span><span style="position:absolute;left:141px;top:160px;white-space:pre;line-height:13px;color:#000;letter-spacing:-0.053px;">Enables this server to be a File Transfer</span><span style="position:absolute;left:141px;top:173px;white-space:pre;line-height:13px;color:#000;letter-spacing:-0.011px;">Protocol (FTP) server. If this service is</span><span style="position:absolute;left:141px;top:186px;white-space:pre;line-height:13px;color:#000;letter-spacing:0.040px;">stopped, the server cannot function as</span><span style="position:absolute;left:141px;top:199px;white-space:pre;line-height:13px;color:#000;letter-spacing:-0.040px;">an FTP server. If this service is disabled,</span><span style="position:absolute;left:141px;top:212px;white-space:pre;line-height:13px;color:#000;letter-spacing:0.005px;">any services that explicitly depend on it</span><span style="position:absolute;left:141px;top:225px;white-space:pre;line-height:13px;color:#000;letter-spacing:0.114px;">will fail to start.</span><span style="position:absolute;left:354px;top:115px;white-space:pre;line-height:13px;color:#000;transform:scaleX(0.9576);transform-origin:0 0;">Name</span><span style="position:absolute;left:484px;top:115px;white-space:pre;line-height:13px;color:#000;letter-spacing:-0.043px;">Description</span><span style="position:absolute;left:615px;top:115px;white-space:pre;line-height:13px;color:#000;letter-spacing:0.083px;">Status</span><span style="position:absolute;left:677px;top:115px;white-space:pre;line-height:13px;color:#000;letter-spacing:0.221px;">Startup Type</span><span style="position:absolute;left:765px;top:115px;white-space:pre;line-height:13px;color:#000;letter-spacing:-0.222px;">Log On As</span><span style="position:absolute;left:146.5px;top:449px;white-space:pre;line-height:13px;color:#000;letter-spacing:0.131px;">Extended</span><span style="position:absolute;left:212.6px;top:449px;white-space:pre;line-height:13px;color:#000;letter-spacing:0.106px;">Standard</span>
</div>
</body></html>
